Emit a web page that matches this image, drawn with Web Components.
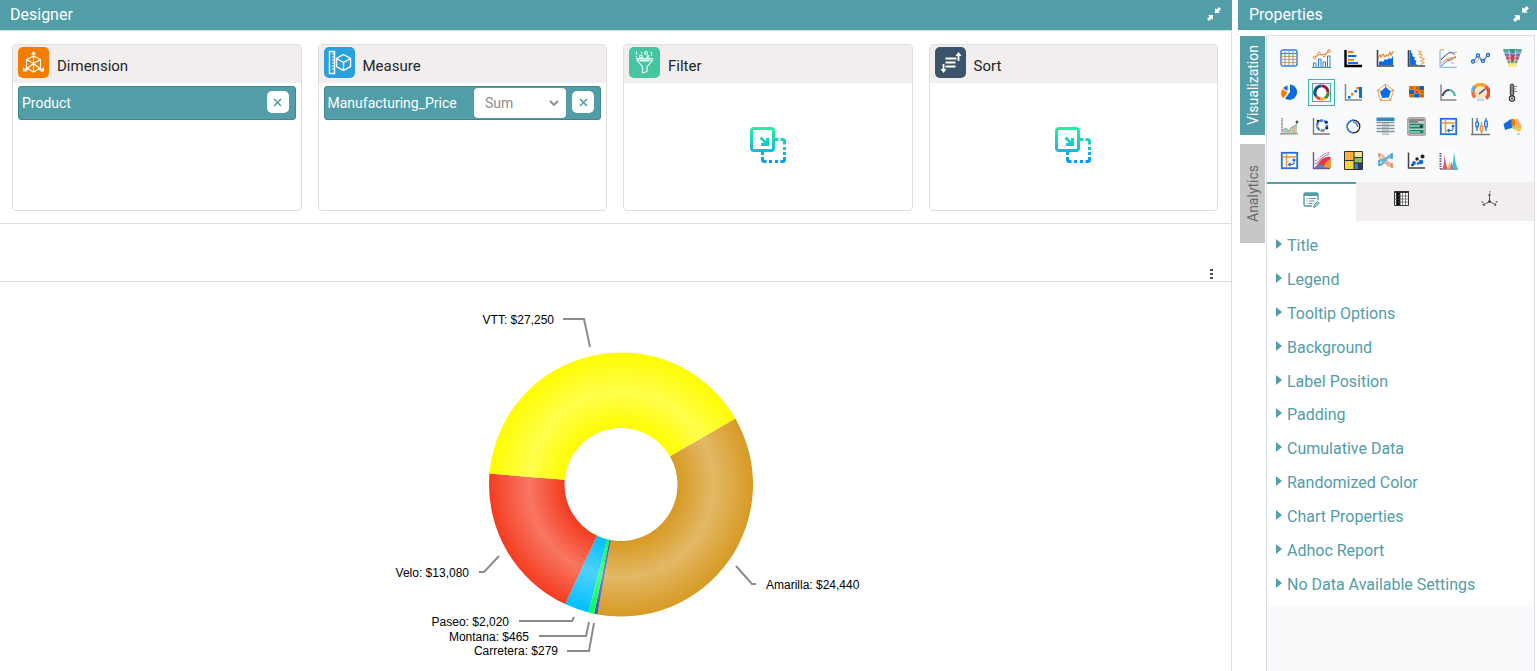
<!DOCTYPE html>
<html lang="en">
<head>
<meta charset="utf-8">
<title>Designer</title>
<style>
    html, body {
        height: 100%;
        margin: 0;
    }

    body {
        font-family: Roboto, "Liberation Sans", sans-serif;
        font-size: 14px;
        color: #212529;
        background: #fff;
        --accent: #519da8;
        --line: #dedede;
        --soft: #f2eeee;
    }
</style>
</head>
<body>
<report-designer></report-designer>

<script>
// 19 x 19 artwork for the chart picker, in display order
const CHARTS = [
    { name: 'Table', art: `
        <rect x="1" y="1" width="16" height="16" rx="2" fill="#fff8ee" stroke="#2f7de0" stroke-width="1.4"/>
        <path d="M1 4.500h16" stroke="#2f7de0"/>
        <path d="M2 7.500h14M2 10.500h14M2 13.500h14" stroke="#f3a044"/>
        <path d="M5 2v15M9 2v15M13 2v15" stroke="#5e9be8"/>` },
    { name: 'Combination', art: `
        <path d="M0 18.400h19" stroke="#2f7de0"/>
        <path d="M1.500 18v-4h2.500v4M6.500 18v-8h2.500v8M11 18v-5h2.500v5M15.500 18V7H18v11" fill="none" stroke="#2f7de0"/>
        <path d="M3 8.500L7 5l5 1.500L17 2" fill="none" stroke="#ef8a2b" stroke-width="1.200"/>
        <g fill="#fff" stroke="#ef8a2b"><circle cx="2.500" cy="8.500" r="1.300"/><circle cx="7" cy="4.500" r="1.300"/><circle cx="12" cy="6.500" r="1.300"/><circle cx="17" cy="2" r="1.300"/></g>` },
    { name: 'Bar', art: `
        <path d="M1.500 1v16H18" fill="none" stroke="#000" stroke-width="2.400"/>
        <path d="M4 3h5.500M4 10.800h6" stroke="#f57c00" stroke-width="1.800"/>
        <path d="M4 7h8.500M4 14h10" stroke="#0b6be0" stroke-width="1.800"/>` },
    { name: 'Area', art: `
        <path d="M1.500 1v16H18" fill="none" stroke="#444" stroke-width="1.600"/>
        <path d="M3 16v-3l2-1 2 1 2-3 2 1 2-2 2 1 2-3v9z" fill="#0b6be0"/>
        <path d="M2 9l2-3 1 2 2-3 2 3 1.500-2L12 7l2-4 1 3 2.500-4" fill="none" stroke="#ef8a2b" stroke-width="1.200"/>` },
    { name: 'Vertical area', art: `
        <path d="M1.500 1v16H18" fill="none" stroke="#444" stroke-width="1.600"/>
        <path d="M2.500 1l2 1-.5 2 2 1-1 2 3 1.500-1 2 2.500 1.500-1 2 1.500 2H2.500z" fill="#0b6be0"/>
        <path d="M11 2l3 1-2 2 3 1-2 2.500 4 1.500-3 2 3 1.500-3 2" fill="none" stroke="#f0a35b" stroke-width="1.200"/>` },
    { name: 'Range', art: `
        <path d="M1 1v17.300h17" fill="none" stroke="#6aa3ea" stroke-width=".9"/>
        <path d="M1 10c4-2 5-5 10-6 3 0 4-1 7-.5M1 14c5-1 5-4 9-5s5 0 7-2" fill="none" stroke="#ef9a4b"/>
        <path d="M2 11l4-4 5-4 3 1.500 2 1M2 17l6-5 4-1 5-3" fill="none" stroke="#2f7de0"/>
        <path d="M1 .8h4M7 11l9-2M12 14h3" stroke="#ef9a4b"/>` },
    { name: 'Line', art: `
        <path d="M2 13l5-7 3 5 2 1 5-6" fill="none" stroke="#2f7de0" stroke-width="1.200"/>
        <path d="M1 14l5-1 3-5 4 4 5-7" fill="none" stroke="#ef9a4b" stroke-width=".8"/>
        <g fill="#fff" stroke="#1668d8" stroke-width="1.300"><circle cx="2" cy="12.500" r="1.500"/><circle cx="7" cy="6.500" r="1.500"/><circle cx="12" cy="12" r="1.500"/><circle cx="17" cy="6" r="1.500"/></g>` },
    { name: 'Funnel', art: `
        <path d="M0 0h19l-1 4H1z" fill="#53a9a0"/><path d="M1.300 4h16.400l-1 3.500H2.300z" fill="#7a79b5"/>
        <path d="M2.600 7.500h13.800l-1 3.500H3.600z" fill="#b25b6d"/><path d="M4 11h11l-1 3.500H5z" fill="#769d69"/>
        <path d="M5 14.500h9l-.7 3.500H5.700z" fill="#f2ea67"/><path d="M6 1l2 17M13 1l-2 17M1 4h17M4 11h11" stroke="#f4f5f7" stroke-width=".6"/>
        <path d="M8 6h3v6H8z" fill="#e03940"/><path d="M7.500 0h4v4h-4z" fill="#3d9187"/>` },
    { name: 'Pie', art: `
        <path d="M10 9V1.500a7.700 7.700 0 11-5 14z" fill="#0b6be0"/>
        <path d="M7.500 8V2.300L3 5z" fill="#0b6be0"/>
        <path d="M7.500 9.800L2.800 6a6.500 6.500 0 00.5 9.300z" fill="#f57c00"/>` },
    { name: 'Doughnut', art: `
        <g fill="none" stroke-width="3.200">
        <path d="M9.500 3a6.500 6.500 0 016.500 6.500" stroke="#9b1440"/><path d="M16 9.500a6.500 6.500 0 01-3 5.500" stroke="#4e8d24"/>
        <path d="M13 15a6.500 6.500 0 01-4.500 1" stroke="#f0b719"/><path d="M8.500 16A6.500 6.500 0 014 13" stroke="#df4a2f"/>
        <path d="M4 13A6.500 6.500 0 019.500 3" stroke="#174f86"/></g><circle cx="9.500" cy="9.500" r="4.900" fill="#fff"/>` },
    { name: 'Waterfall', art: `
        <path d="M1.500 1v16H18" fill="none" stroke="#888" stroke-width="1.500"/>
        <path d="M4 13h2.500v2.500H4zM10.500 7H13v2.500h-2.500zM15 4h3v11h-3z" fill="#0b6be0"/><path d="M7 10h2.500v2.500H7zM12.500 4H15v2.500h-2.500z" fill="#f57c00"/>` },
    { name: 'Radar', art: `
        <path d="M9.500 1.200l8 6.200-3 10h-10l-3-10z" fill="none" stroke="#f0a35b"/>
        <path d="M9.500 1v4M18 7l-4 1.500M1 7l4 1.500M4 18l2-3M15 18l-2-3" stroke="#ef8a2b"/>
        <path d="M9.800 4l5 4.500-2 6-6.500.5L4 9z" fill="#0b6be0"/>` },
    { name: 'Heat map', art: `
        <path d="M2 3h5v4H2zM12 7h5v4h-5zM2 11h5v3.500H2zM7 3h5v4H7z" fill="#f57c00"/>
        <path d="M12 3h5v4h-5zM2 7h5v4H2zM7 11h5v3.500H7z" fill="#0b6be0"/>
        <path d="M7 7h5v4H7zM12 11h5v3.500h-5z" fill="#d7761c"/>
        <path d="M4 5h2M9 5h2M14 5h2M4 9h2M9 9h2M14 9h2M4 13h2M9 13h2M14 13h2" stroke="#3d3b43" stroke-width=".8"/>` },
    { name: 'Curve', art: `
        <path d="M2 1.500v15.500h15.500" fill="none" stroke="#888" stroke-width="1.500"/>
        <path d="M3.500 13C5 8.500 7 7 10 7" fill="none" stroke="#3c4560" stroke-width="2"/>
        <path d="M10 7c3 0 5 2 6 6" fill="none" stroke="#35b99c" stroke-width="2"/>` },
    { name: 'Gauge', art: `
        <g fill="none" stroke-width="3.600"><path d="M4 14.500A8 8 0 012 9" stroke="#f06a4c"/><path d="M2 9a7.500 7.500 0 0112.500-5.500" stroke="#f5a623"/>
        <path d="M14.500 3.500a7.500 7.500 0 01.5 12" stroke="#e8503f"/><path d="M1.900 8a8 8 0 012-4.500" stroke="#66a9dc"/></g>
        <circle cx="9.500" cy="9.500" r="5.600" fill="#fbe3c0"/><path d="M8 11l6-5" stroke="#294b70" stroke-width="1.600"/>
        <rect x="5.500" y="15.500" width="8" height="2.500" rx="1" fill="#ccd6e3"/>` },
    { name: 'Thermometer', art: `
        <rect x="7.300" y="1" width="3.400" height="12" rx="1.700" fill="#888" stroke="#333"/><circle cx="9" cy="15.500" r="2.600" fill="#fff" stroke="#333" stroke-width="1.300"/>
        <circle cx="9" cy="15.500" r="1" fill="#222"/><path d="M11.500 3.500h2.500M11.500 6H13M11.500 8.500H14" stroke="#777"/>` },
    { name: 'Trend', art: `
        <path d="M3 17v-4l3-2 3 3 3-4 3-1 2-3v11z" fill="#a9d8a8"/><path d="M7 17v-5l2 2v3M13 17v-7l2-1v8" fill="#f2a3a3"/>
        <path d="M3 13l3-2 3 3 3-4 3-1 2-3" fill="none" stroke="#999"/>
        <path d="M2 1v16M0 17h18" stroke="#6b6374" stroke-width="1.200" stroke-dasharray="1.500 .6"/><circle cx="17" cy="5" r="1.400" fill="#555"/>` },
    { name: 'Polar', art: `
        <path d="M1.500 1v16H18" fill="none" stroke="#777" stroke-width="1.400"/>
        <circle cx="10" cy="8.500" r="5" fill="none" stroke="#2f7de0" stroke-width="2.400" stroke-dasharray="4 1"/>
        <g fill="#222"><circle cx="6" cy="4" r="1.300"/><circle cx="14.500" cy="5" r="1.300"/><circle cx="15" cy="11" r="1.300"/></g><g fill="#ef8a2b"><circle cx="5" cy="9" r="1.300"/><circle cx="11" cy="14" r="1.300"/></g>` },
    { name: 'Radial ring', art: `
        <circle cx="9.500" cy="9.500" r="6.300" fill="none" stroke="#222" stroke-width="1.300"/>
        <path d="M9.500 3.200a6.300 6.300 0 100 12.600M9 5a4.500 4.500 0 014.500 5" fill="none" stroke="#2f7de0" stroke-width="1.400"/>` },
    { name: 'Pivot', art: `
        <path d="M.5.500h18V4H.5z" fill="#2d8cc0"/><path d="M.5 5h18v10H.5z" fill="#fff"/>
        <path d="M6 5h7v13H6z" fill="#cfd6d8"/><path d="M.5 5.500h18M.5 8.500h18M.5 11.500h18M.5 14.500h18" stroke="#85939a" stroke-width="1.400"/><path d="M6 17.500h7" stroke="#bbb"/>` },
    { name: 'Card', art: `
        <rect x=".8" y=".8" width="17.400" height="17.400" rx="1" fill="#c9cbc9" stroke="#8b8b8b"/>
        <path d="M2 3h15M2 5h9" stroke="#444"/><path d="M2.500 6.800h14v4.700h-14zM2.500 13h14v3.500h-14z" fill="#17856a"/>
        <path d="M3 9h11M3 15h10" stroke="#e8f1ee"/><circle cx="14" cy="9.500" r="1.200" fill="#222"/>` },
    { name: 'Cross tab', art: `
        <rect x="1.800" y="1.800" width="15.400" height="15.400" fill="#fff" stroke="#1f72dd" stroke-width="1.800"/>
        <path d="M2.700 6h13.600M6.500 2.700v13.600" stroke="#f0913a" stroke-width="1.500"/>
        <path d="M9 13.500h3.500q1.500 0 1.500-2V8M10.500 12l-2 1.500 2 1.800M12.500 9.500L14 8l1.500 1.500" fill="none" stroke="#1f72dd" stroke-width="1.200"/>` },
    { name: 'Candlestick', art: `
        <path d="M1.500 1v17M0 17.500h19" stroke="#777" stroke-width="1.400"/>
        <g stroke-width="1.300"><path d="M6 1v13M15 1v13" stroke="#1f72dd"/><path d="M10.500 5v12" stroke="#ef8a2b"/>
        <rect x="4.800" y="5" width="2.600" height="5" rx="1" fill="#fff" stroke="#1f72dd"/><rect x="13.700" y="4" width="2.600" height="6" rx="1" fill="#fff" stroke="#1f72dd"/><rect x="9.300" y="9" width="2.600" height="5" rx="1" fill="#fff" stroke="#ef8a2b"/></g>` },
    { name: 'Map', art: `
        <path d="M.5 7l4.500-3 3-2 1 1v8l-4 1-3 1z" fill="#0b6be0"/><path d="M8.500 1.500l4 1V9h-4z" fill="#f57c00"/>
        <path d="M12.500 3l2-1.500 1.500 3 2.500 4v3h-6z" fill="#f9b05f"/><path d="M9 9h3.500v4L9 11z" fill="#a8cf72"/><path d="M12.500 11h6l-1.500 3.500h-2l-2.500-2z" fill="#f8c34a"/><circle cx="15.500" cy="17" r="1" fill="#8cc56b"/>` },
    { name: 'Matrix', art: `
        <rect x="1.800" y="1.800" width="15.400" height="15.400" fill="#fff" stroke="#1f72dd" stroke-width="1.800"/>
        <path d="M2.700 6h13.600M6.500 2.700v13.600" stroke="#f0913a" stroke-width="1.500"/>
        <path d="M9 13.500h3.500q1.500 0 1.500-2V8M10.500 12l-2 1.500 2 1.800M12.500 9.500L14 8l1.500 1.500" fill="none" stroke="#1f72dd" stroke-width="1.200"/>` },
    { name: 'Stacked area', art: `
        <path d="M2 17C7 14 7 6 18.500 5.500V17z" fill="#e8334a"/><path d="M9 17c4-2 4-7 9.500-9v9z" fill="#f59a22"/><path d="M2 17.500l5-4 5 1 2 3z" fill="#4e8fc2"/>
        <path d="M3 10c4-1 6-7 14-8.500" fill="none" stroke="#d95664" stroke-dasharray="2 1"/>
        <path d="M3 13c4-2 7-8 14-9.500" fill="none" stroke="#4c82bd"/><path d="M1.500 1v16.500H18" fill="none" stroke="#70569c" stroke-width="1.400"/>` },
    { name: 'Tree map', art: `
        <path d="M.5.500h9.500v9H.5z" fill="#fbb040"/><path d="M10 .5h8.500v6H10z" fill="#f6e58d"/><path d="M.5 9.500H10v9H.5z" fill="#f5d63d"/>
        <path d="M10 6.500h8.500V12H10z" fill="#8cc152"/><path d="M10 12h4.500v6.500H10z" fill="#2f7de0"/><path d="M14.500 12h4v6.500h-4z" fill="#1c3f95"/>
        <path d="M.5.500h18v18H.5zM10 .5v18M.5 9.500H10M10 6.500h8.500M10 12h8.500M14.500 12v6.500" fill="none" stroke="#30302c"/>` },
    { name: 'Sankey', art: `
        <path d="M3 3.500c6 0 7 10 13 10M3 7.500c5 0 7 8 13 8" fill="none" stroke="#f3b18e" stroke-width="2.400"/>
        <path d="M3 14c6 0 7-10 13-10M3 10c4 0 7-4 13-4" fill="none" stroke="#56b5e0" stroke-width="2.400" opacity=".9"/>
        <path d="M3 2v4M16 12v5" stroke="#ef7d3b" stroke-width="1.500"/><path d="M3 9v6M16 2v6" stroke="#2b9fd4" stroke-width="1.500"/>` },
    { name: 'Scatter', art: `
        <path d="M1.500 1.500v15.500H18" fill="none" stroke="#444" stroke-width="1.500"/>
        <g fill="#222"><circle cx="10" cy="8" r="1.700"/><circle cx="15.500" cy="5.500" r="2"/><circle cx="5.500" cy="14" r="1.300"/></g>
        <g fill="#0b6be0"><circle cx="7" cy="12" r="1.900"/><circle cx="14" cy="11" r="2.300"/><circle cx="11" cy="12.500" r="1.300"/></g>` },
    { name: 'Peaks', art: `
        <path d="M0 0h19v19H0z" fill="#fff"/>
        <path d="M3 18c2-3 2-8 2.500-14C6.500 10 7 15 9 18z" fill="#ef4f74"/><path d="M8 18c1-2 2-5 2.500-8 1 3 1.500 6 3 8z" fill="#f7b733"/>
        <path d="M12 18c2-4 2.500-11 3-17.500.8 7 1.500 13 4 17.500z" fill="#37c3e8"/><path d="M10.500 18c1.500-2 1.500-5 2-8 .5 3 1 6 2.500 8z" fill="#a177bf"/>
        <path d="M1.500 2v16" stroke="#4a5a94" stroke-width="2" stroke-dasharray="1.500 1"/><path d="M1 18.300h18" stroke="#888"/>` }
];

const SECTIONS = ['Title', 'Legend', 'Tooltip Options', 'Background', 'Label Position', 'Padding',
    'Cumulative Data', 'Randomized Color', 'Chart Properties', 'Adhoc Report', 'No Data Available Settings'];

// leader and label positions share the chart's own coordinate space
const SLICES = [
    { label: 'Amarilla', value: 24440, base: '#d79a24', light: '#e3b866', line: '736,566 752,584 756,584', x: 766, y: 589, anchor: 'start' },
    { label: 'Carretera', value: 279, base: '#4152a6', light: '#7c88c4', line: '567,651 589,651 594,623', x: 558, y: 655, anchor: 'end' },
    { label: 'Montana', value: 465, base: '#00fb52', light: '#4dff8b', line: '539,636 586,636 589,622', x: 529, y: 641, anchor: 'end' },
    { label: 'Paseo', value: 2020, base: '#00bfff', light: '#4dd2ff', line: '519,621 572,621 574,617', x: 509, y: 626, anchor: 'end' },
    { label: 'Velo', value: 13080, base: '#f43c20', light: '#f77763', line: '479,572 484,572 499,556', x: 469, y: 577, anchor: 'end' },
    { label: 'VTT', value: 27250, base: '#fffb00', light: '#ffff4d', line: '563,319 584,319 590,347', x: 554, y: 324, anchor: 'end' }
];

class PanelHeader extends HTMLElement {
    constructor() {
        super();
        this.attachShadow({ mode: 'open' });
        this.shadowRoot.innerHTML = `
        <style>
            :host {
                display: flex;
                align-items: center;
                justify-content: space-between;
                height: 30px;
                padding: 0 11px 0 10px;
                background: var(--accent);
                color: #fff;
            }

            h2 {
                margin: 0;
                font-size: 16px;
                font-weight: 400;
                line-height: 30px;
            }

            button {
                display: flex;
                padding: 0 0 3px;
                border: 0;
                background: none;
                color: inherit;
                cursor: pointer;
            }

            svg {
                width: var(--collapse-size, 14px);
                height: var(--collapse-size, 14px);
            }
        </style>
        <h2><slot></slot></h2>
        <button type="button" aria-label="Collapse">
            <svg viewBox="0 0 14 14" fill="currentColor">
                <path d="M8 1v5h5l-1.500-1.500L14 2l-2-2-2.500 2.500z"/>
                <path d="M6 13V8H1l1.500 1.500L0 12l2 2 2.500-2.500z"/>
            </svg>
        </button>
        `;
    }
}
customElements.define('panel-header', PanelHeader);

class FieldCard extends HTMLElement {
    constructor() {
        super();
        this.attachShadow({ mode: 'open' });
        this.shadowRoot.innerHTML = `
        <style>
            :host {
                display: flex;
                flex-direction: column;
                flex: 1 1 0;
                min-width: 0;
                min-height: 165px;
                border: 1px solid var(--line);
                border-radius: 4px;
                overflow: hidden;
            }

            header {
                display: flex;
                align-items: center;
                gap: 8px;
                height: 36px;
                padding: 2px 5px 0;
                background: var(--soft);
            }

            h3 {
                margin: 0;
                padding-top: 2px;
                font-size: 15px;
                font-weight: 400;
                color: #212529;
            }

            ::slotted(svg) {
                align-self: flex-start;
                flex: none;
                width: 31px;
                height: 31px;
                border-radius: 5px;
            }

            .body {
                display: flex;
                flex: 1;
                flex-direction: column;
                padding: 3px 5px;
            }
        </style>
        <header><slot name="icon"></slot><h3></h3></header>
        <div class="body"><slot></slot></div>
        `;
    }

    connectedCallback() {
        this.shadowRoot.querySelector('h3').textContent = this.getAttribute('heading');
    }
}
customElements.define('field-card', FieldCard);

class FieldChip extends HTMLElement {
    constructor() {
        super();
        this.attachShadow({ mode: 'open' });
        this.shadowRoot.innerHTML = `
        <style>
            :host {
                display: flex;
                align-items: center;
                gap: 6px;
                height: 32px;
                padding: 0 6px 0 3px;
                border: 1px solid #42868f;
                border-radius: 3px;
                background: var(--accent);
                color: #fff;
            }

            .name {
                flex: 1;
                font-size: 14px;
            }

            button {
                display: flex;
                align-items: center;
                justify-content: center;
                width: 22px;
                height: 22px;
                margin-bottom: 2px;
                padding: 0;
                border: 0;
                border-radius: 5px;
                background: #fff;
                color: var(--accent);
            }

            label {
                position: relative;
                display: flex;
            }

            label svg {
                position: absolute;
                right: 7px;
                top: 12px;
                pointer-events: none;
            }

            select {
                appearance: none;
                width: 92px;
                height: 30px;
                padding: 0 11px;
                border: 0;
                border-radius: 4px;
                background: #fff;
                color: #8c8c8c;
                font: 14px Roboto, "Liberation Sans", sans-serif;
            }
        </style>
        <span class="name"></span>
        <button type="button" aria-label="Remove">
            <svg width="9" height="9" viewBox="0 0 9 9"><path d="M1 1l7 7M8 1L1 8" stroke="currentColor" stroke-width="1.600"/></svg>
        </button>
        `;
    }

    connectedCallback() {
        this.shadowRoot.querySelector('.name').textContent = this.getAttribute('name');
        if (this.hasAttribute('aggregate')) {
            const label = document.createElement('label');
            label.innerHTML = `
            <select aria-label="Aggregate"><option>${this.getAttribute('aggregate')}</option><option>Average</option><option>Count</option></select>
            <svg width="10" height="7" viewBox="0 0 10 7" fill="none"><path d="M1 1l4 4 4-4" stroke="#8c8c8c" stroke-width="1.800"/></svg>`;
            this.shadowRoot.querySelector('.name').after(label);
        }
    }
}
customElements.define('field-chip', FieldChip);

class DropHint extends HTMLElement {
    constructor() {
        super();
        this.attachShadow({ mode: 'open' });
        this.shadowRoot.innerHTML = `
        <style>
            :host {
                display: flex;
                flex: 1;
                align-items: center;
                justify-content: center;
                padding-bottom: 4px;
            }
        </style>
        <svg width="36" height="36" viewBox="0 0 36 36" fill="none">
            <defs>
                <linearGradient id="g" gradientUnits="userSpaceOnUse" x1="0" y1="0" x2="0" y2="36">
                    <stop offset="0" stop-color="#22f59a"/>
                    <stop offset=".65" stop-color="#12bcdc"/>
                    <stop offset="1" stop-color="#0097fb"/>
                </linearGradient>
            </defs>
            <g stroke="url(#g)" stroke-width="3">
                <rect x="1.500" y="1.500" width="22" height="22" rx="2.500"/>
                <path d="M12.500 25v3M12.500 30v2.500q0 2 2 2h2M19 34.500h3M25 34.500h3M30.500 34.500h2q2 0 2-2V30M34.500 28v-3M34.500 23v-3M34.500 17.500v-3q0-2-2-2h-2M28.500 12.500H25"/>
                <path d="M10.500 10.500l6 6M17.500 11v6.500H11"/>
            </g>
        </svg>
        `;
    }
}
customElements.define('drop-hint', DropHint);

class DoughnutChart extends HTMLElement {
    constructor() {
        super();
        this.attachShadow({ mode: 'open' });
        this.shadowRoot.innerHTML = `
        <style>
            :host {
                display: flex;
                justify-content: center;
                padding: 8px 0 0 11px;
            }

            svg {
                width: 490px;
                max-width: 100%;
                overflow: visible;
            }

            text {
                font-family: "Liberation Sans", Arial, sans-serif;
                font-size: 12px;
                fill: #000;
            }

            polyline {
                fill: none;
                stroke: #8c8c8c;
                stroke-width: 2;
            }
        </style>
        <svg viewBox="376 290 490 381" role="img" aria-label="Manufacturing_Price by Product"></svg>
        `;
    }

    connectedCallback() {
        const cx = 621, cy = 484.5, outer = 132, inner = 56.5;
        const total = SLICES.reduce((sum, s) => sum + s.value, 0);
        const point = (r, a) => `${(cx + r * Math.cos(a)).toFixed(2)} ${(cy + r * Math.sin(a)).toFixed(2)}`;
        let angle = -Math.PI / 6;
        let out = '';

        SLICES.forEach((s, i) => {
            const end = angle + s.value / total * Math.PI * 2;
            const large = end - angle > Math.PI ? 1 : 0;
            out += `
            <radialGradient id="s${i}" gradientUnits="userSpaceOnUse" cx="${cx}" cy="${cy}" r="${outer}">
                <stop offset=".43" stop-color="${s.base}"/>
                <stop offset=".7" stop-color="${s.light}"/>
                <stop offset="1" stop-color="${s.base}"/>
            </radialGradient>
            <path fill="url(#s${i})" d="M${point(outer, angle)}A${outer} ${outer} 0 ${large} 1 ${point(outer, end)}L${point(inner, end)}A${inner} ${inner} 0 ${large} 0 ${point(inner, angle)}z"/>
            <polyline points="${s.line}"/>
            <text x="${s.x}" y="${s.y}" text-anchor="${s.anchor}">${s.label}: $${s.value.toLocaleString('en-US')}</text>`;
            angle = end;
        });
        this.shadowRoot.querySelector('svg').innerHTML = out;
    }
}
customElements.define('doughnut-chart', DoughnutChart);

class ChartPicker extends HTMLElement {
    constructor() {
        super();
        this.attachShadow({ mode: 'open' });
        this.shadowRoot.innerHTML = `
        <style>
            :host {
                display: grid;
                grid-template-columns: repeat(8, 1fr);
                grid-auto-rows: 34px;
                place-items: center;
                padding: 5px 6px 5px 7px;
            }

            button {
                display: flex;
                padding: 3px;
                border: 1px solid transparent;
                background: none;
            }

            button svg {
                width: 19px;
                height: 19px;
            }

            button[aria-pressed="true"] {
                border-color: #3bb3ab;
            }

            button[aria-pressed="true"] svg {
                outline: 1px solid #3bb3ab;
                outline-offset: -1px;
            }
        </style>
        ${CHARTS.map(c => `<button type="button" aria-label="${c.name}" aria-pressed="${c.name === 'Doughnut'}"><svg viewBox="0 0 19 19">${c.art}</svg></button>`).join('')}
        `;
    }
}
customElements.define('chart-picker', ChartPicker);

class PropertyTabs extends HTMLElement {
    constructor() {
        super();
        this.attachShadow({ mode: 'open' });
        this.shadowRoot.innerHTML = `
        <style>
            :host {
                display: flex;
            }

            button {
                display: flex;
                flex: 1;
                justify-content: center;
                align-items: flex-start;
                height: 39px;
                padding: 7px 0 0;
                border: 0;
                border-top: 2px solid var(--soft);
                background: var(--soft);
            }

            button[aria-selected="true"] {
                padding-top: 8px;
                border-top-color: var(--accent);
                background: #fff;
            }
        </style>
        <button type="button" role="tab" aria-selected="true" aria-label="Options">
            <svg width="17" height="17" viewBox="0 0 17 17" fill="none" stroke="#519da8">
                <path d="M15 8V2.500Q15 1 13.500 1h-11Q1 1 1 2.500v10Q1 14 2.500 14H9" stroke-width="1.400"/>
                <path d="M1 2.500h14" stroke-width="3"/>
                <path d="M3.500 6.500h1M6 6.500h7M3.500 9h1M6 9h5.500M3.500 11.500h1M6 11.500h3.500"/>
                <path d="M10.500 15.500l.5-2.500 3.500-3.500 1.700 1.700-3.500 3.500z" fill="#a5cdd3"/>
            </svg>
        </button>
        <button type="button" role="tab" aria-selected="false" aria-label="Columns">
            <svg width="16" height="16" viewBox="0 0 16 16" fill="none" stroke="#333">
                <path d="M1.500 1v13.500h14V1" fill="#fff"/><path d="M1 1h15" stroke-width="2"/><path d="M3.500 1H7v13.500H3.500z" fill="#000"/>
                <path d="M1.500 5h14M1.500 8h14M1.500 11h14M9.500 2v12.500M12.500 2v12.500" stroke="#555" stroke-width=".7"/>
            </svg>
        </button>
        <button type="button" role="tab" aria-selected="false" aria-label="Axes">
            <svg width="17" height="17" viewBox="0 0 17 17" fill="none" stroke="#555">
                <path d="M8.500 3v7.500L2 14M8.500 10.500L15 14M7.500 4.500l1-2 1 2M2.500 12.500L2 14l2 .3M14.500 12.500l.5 1.500-2 .3"/>
                <path d="M8 0l2 1.500M.5 10l2 2M1 12l1-1.500M14.500 10.500h2l-2 2" stroke-width=".7"/><circle cx="8.500" cy="10.500" r="1" fill="#222"/>
            </svg>
        </button>
        `;
    }
}
customElements.define('property-tabs', PropertyTabs);

class PropertySections extends HTMLElement {
    constructor() {
        super();
        this.attachShadow({ mode: 'open' });
        this.shadowRoot.innerHTML = `
        <style>
            :host {
                display: grid;
                grid-template-rows: repeat(11, 1fr);
                height: 372px;
                padding: 8px 9px 5px;
                background: #fff;
            }

            button {
                display: flex;
                align-items: center;
                gap: 5px;
                padding: 0;
                border: 0;
                background: none;
                color: var(--accent);
                font: 16px Roboto, "Liberation Sans", sans-serif;
                text-align: left;
            }

            svg {
                padding-bottom: 3px;
            }
        </style>
        ${SECTIONS.map(s => `<button type="button" aria-expanded="false"><svg width="6" height="10" viewBox="0 0 6 10"><path d="M0 0l6 5-6 5z" fill="currentColor"/></svg>${s}</button>`).join('')}
        `;
    }
}
customElements.define('property-sections', PropertySections);

class SideTabs extends HTMLElement {
    constructor() {
        super();
        this.attachShadow({ mode: 'open' });
        this.shadowRoot.innerHTML = `
        <style>
            :host {
                display: flex;
                flex-direction: column;
                gap: 9px;
                padding-top: 1px;
            }

            button {
                width: 25px;
                height: 99px;
                padding: 0;
                border: 0;
                writing-mode: vertical-rl;
                transform: rotate(180deg);
                background: #c7c7c7;
                color: #6b6b6b;
                font: 14px Roboto, "Liberation Sans", sans-serif;
                text-align: center;
            }

            button[aria-selected="true"] {
                background: var(--accent);
                color: #fff;
            }
        </style>
        <button type="button" role="tab" aria-selected="true">Visualization</button>
        <button type="button" role="tab" aria-selected="false">Analytics</button>
        `;
    }
}
customElements.define('side-tabs', SideTabs);

class ReportDesigner extends HTMLElement {
    constructor() {
        super();
        this.attachShadow({ mode: 'open' });
        this.shadowRoot.innerHTML = `
        <style>
            :host {
                display: grid;
                grid-template-columns: minmax(0, 1fr) 299px;
                gap: 6px;
                min-height: 100%;
            }

            main {
                display: flex;
                flex-direction: column;
            }

            .workspace {
                flex: 1;
                border: 1px solid var(--line);
                border-width: 1px 1px 0 0;
            }

            .fields {
                display: flex;
                gap: 16px;
                padding: 13px 13px 12px 12px;
                border-bottom: 1px solid var(--line);
            }

            .toolbar {
                display: flex;
                align-items: flex-end;
                justify-content: flex-end;
                height: 57px;
                padding: 0 18px 0 0;
                border-bottom: 1px solid var(--line);
            }

            .toolbar button {
                display: flex;
                padding: 0 0 1px;
                border: 0;
                background: none;
            }

            aside {
                display: flex;
                flex-direction: column;
            }

            aside panel-header {
                --collapse-size: 16px;
                padding: 0 8px 0 11px;
            }

            .properties {
                display: flex;
                flex: 1;
                gap: 1px;
                padding: 5px 2px 0;
            }

            .panel {
                flex: 1;
                border: 1px solid #dcdde5;
                border-bottom: 0;
                background: #f9fafc;
            }
        </style>
        <main>
            <panel-header>Designer</panel-header>
            <div class="workspace">
                <div class="fields">
                    <field-card heading="Dimension">
                        <svg slot="icon" viewBox="0 0 31 31" fill="none" stroke="#fff" stroke-width="1.200">
                            <rect width="31" height="31" fill="#f57c00" stroke="none"/>
                            <path d="M15.500 9l7 3.500v8.500l-7 4-7-4v-8.500zM8.500 12.500l7 4 7-4M15.500 5.500v19M15.500 16.500l-9 7M15.500 16.500l9 7"/>
                            <path d="M14 7l1.500-2L17 7zM5.500 21.500v2.500h2.500zM25.500 21.500v2.500H23z" fill="#fff"/>
                        </svg>
                        <field-chip name="Product"></field-chip>
                    </field-card>
                    <field-card heading="Measure">
                        <svg slot="icon" viewBox="0 0 31 31" fill="none" stroke="#fff" stroke-width="1.400">
                            <rect width="31" height="31" fill="#29a1de" stroke="none"/>
                            <path d="M5.500 4.500h5v22h-5z"/><path d="M8 7h2M8 10h2M8 13h2M8 16h2M8 19h2M8 22h2" stroke-width="1"/>
                            <path d="M19.500 7.500l7 4v8l-7 4-7-4v-8zM12.500 11.500l7 4 7-4M19.500 15.500v8"/>
                        </svg>
                        <field-chip name="Manufacturing_Price" aggregate="Sum"></field-chip>
                    </field-card>
                    <field-card heading="Filter">
                        <svg slot="icon" viewBox="0 0 31 31" fill="none" stroke="#e9fff8" stroke-width="1.200">
                            <rect width="31" height="31" fill="#45c6a0" stroke="none"/>
                            <path d="M7 11.500h17M8 13l5.500 7v6l4.500-1.500V20l5.500-7zM11 14h9"/>
                            <path d="M7.500 4.500v3M22.500 5v4M7.500 9v1M12.500 5v1.500"/>
                            <circle cx="17" cy="6" r="1.500"/><circle cx="12" cy="9.500" r="1.500"/><circle cx="19" cy="9.500" r="1"/>
                        </svg>
                        <drop-hint></drop-hint>
                    </field-card>
                    <field-card heading="Sort">
                        <svg slot="icon" viewBox="0 0 31 31" fill="none" stroke="#fff" stroke-width="1.800">
                            <rect width="31" height="31" fill="#3b546b" stroke="none"/>
                            <path d="M10.500 11.500h11M10.500 15.500h10M10.500 19.500h10"/><path d="M23.500 14V8M8.500 17v7"/>
                            <path d="M20.500 9l3-4 3 4zM5.500 22l3 4 3-4z" fill="#fff" stroke="none"/>
                        </svg>
                        <drop-hint></drop-hint>
                    </field-card>
                </div>
                <div class="toolbar">
                    <button type="button" aria-label="More">
                        <svg width="4" height="11" viewBox="0 0 4 11" fill="#4b4b5b"><path d="M1 0h3v2H1zM1 4h3v2H1zM1 8h3v2H1z"/></svg>
                    </button>
                </div>
                <doughnut-chart></doughnut-chart>
            </div>
        </main>
        <aside>
            <panel-header>Properties</panel-header>
            <div class="properties">
                <side-tabs></side-tabs>
                <div class="panel">
                    <chart-picker></chart-picker>
                    <property-tabs></property-tabs>
                    <property-sections></property-sections>
                </div>
            </div>
        </aside>
        `;
    }
}
customElements.define('report-designer', ReportDesigner);
</script>
</body>
</html>
